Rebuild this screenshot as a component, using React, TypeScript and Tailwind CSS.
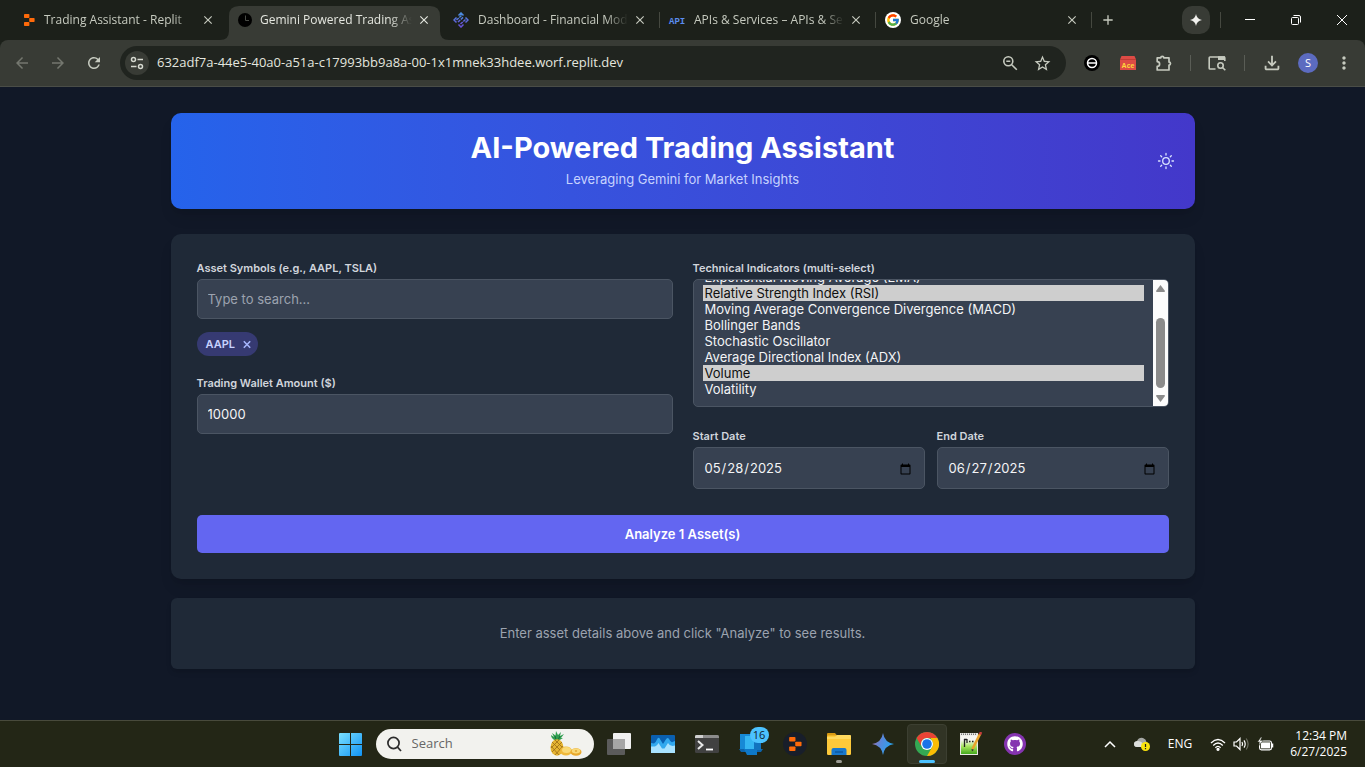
import { useEffect, useRef, useState } from "react";
import type { ReactNode } from "react";
import { FcGoogle } from "react-icons/fc";
import { FaGithub } from "react-icons/fa";
import {
  MdArrowBack,
  MdArrowForward,
  MdRefresh,
  MdStarOutline,
  MdMoreVert,
  MdClose,
  MdAdd,
  MdOutlineFileDownload,
} from "react-icons/md";

const UI = "font-['Open_Sans','Noto_Sans',sans-serif]";

/* ---------- Small drawings ---------- */

function ReplitMark({ className }: { className: string }) {
  return (
    <svg viewBox="0 0 12 12" className={className} fill="#ff6a0a" aria-hidden="true">
      <rect x="1" y="0" width="5.4" height="3.9" rx="0.7" />
      <rect x="6.2" y="4" width="5.4" height="4" rx="0.7" />
      <rect x="1" y="8.1" width="5.4" height="3.9" rx="0.7" />
    </svg>
  );
}

function ClockMark() {
  return (
    <svg viewBox="0 0 16 16" className="size-4" aria-hidden="true">
      <circle cx="8" cy="8" r="7" fill="#000" />
      <path d="M8.5 3.5V8.5H12" fill="none" stroke="#4a4d47" strokeWidth="1" />
    </svg>
  );
}

function LatticeMark() {
  return (
    <svg viewBox="0 0 16 16" className="size-4" aria-hidden="true">
      <defs>
        <linearGradient id="lattice" x1="0" y1="0" x2="0" y2="1">
          <stop offset="0" stopColor="#4a90e2" />
          <stop offset="1" stopColor="#6a4fd8" />
        </linearGradient>
      </defs>
      <g fill="none" stroke="url(#lattice)" strokeWidth="1.5">
        <path d="M5.500 3.500L8 1L10.500 3.500M12.500 5.500L15 8L12.500 10.500M10.500 12.500L8 15L5.500 12.500M3.500 10.500L1 8L3.500 5.500" />
        <path d="M3.500 8L8.500 3.500M5 10L10.500 5M7.500 12L12.500 7.500" strokeDasharray="3 0.8" />
      </g>
    </svg>
  );
}

function ApiMark() {
  return (
    <svg viewBox="0 0 18 16" className="h-4 w-[18px]" aria-hidden="true">
      <text x="1" y="12" fontSize="9" fontWeight="700" fill="#5b8def" fontFamily="'Liberation Mono', monospace">
        API
      </text>
    </svg>
  );
}

function GoogleMark() {
  return (
    <span className="flex size-4 items-center justify-center rounded-full bg-white">
      <FcGoogle className="size-[14px]" />
    </span>
  );
}

function ChromeMark() {
  return (
    <svg viewBox="0 0 24 24" className="size-6" aria-hidden="true">
      <circle cx="12" cy="12" r="12" fill="#34a853" />
      <path d="M12 0A12 12 0 0 1 22.4 6H12A6 6 0 0 0 6.8 15L1.6 6A12 12 0 0 1 12 0Z" fill="#ea4335" />
      <path d="M22.4 6A12 12 0 0 1 12 24L17.2 15A6 6 0 0 0 17.2 9L15.5 6Z" fill="#fbbc04" />
      <circle cx="12" cy="12" r="6" fill="#fff" />
      <circle cx="12" cy="12" r="4.8" fill="#1a73e8" />
    </svg>
  );
}

function Pineapple() {
  return (
    <svg viewBox="0 0 34 26" className="h-[26px] w-[34px]" aria-hidden="true">
      <path d="M8 10C4 8 3 6 3 4L6 6L4 2L7.500 4.500L8 0L10 4L13 1L12 5L16 3L13 7L15 7L10 10Z" fill="#2f9e4f" />
      <path d="M8 9L7 5M10 9L12 5" stroke="#17693a" strokeWidth="1" />
      <ellipse cx="9" cy="16.500" rx="6.500" ry="8.200" fill="#e5b432" />
      <path d="M4 11L14 21M3 15L11 24M7 9L15 17M14 11L4 21M15 15L7 24M11 9L3 17" stroke="#9a6b14" strokeWidth="0.800" />
      <ellipse cx="18" cy="20" rx="6" ry="4.500" fill="#f0b93a" />
      <ellipse cx="18.500" cy="19" rx="4.500" ry="3" fill="#f9d977" />
      <ellipse cx="28" cy="21" rx="5.500" ry="3.800" fill="#e9a92c" />
      <ellipse cx="28" cy="20" rx="4.300" ry="2.400" fill="#f9d977" />
      <ellipse cx="28" cy="20" rx="1.200" ry="0.700" fill="#d99a26" />
    </svg>
  );
}

/* ---------- Browser chrome ---------- */

type TabInfo = { title: string; icon: ReactNode; active?: boolean; divider?: boolean };

const tabs: TabInfo[] = [
  { title: "Trading Assistant - Replit", icon: <ReplitMark className="size-3" /> },
  { title: "Gemini Powered Trading Ass", icon: <ClockMark />, active: true },
  { title: "Dashboard - Financial Mode", icon: <LatticeMark />, divider: true },
  { title: "APIs & Services – APIs & Ser", icon: <ApiMark />, divider: true },
  { title: "Google", icon: <GoogleMark />, divider: true },
];

function Tab({ tab }: { tab: TabInfo }) {
  return (
    <div
      className={`relative flex w-[216px] min-w-0 items-center pl-2 pr-3 ${
        tab.active ? "mt-[6px] h-[34px] pb-[6px] text-[#e4e6df]" : "h-10 text-[#c6cabf]"
      }`}
    >
      {tab.active && (
        <svg viewBox="0 0 229 34" preserveAspectRatio="none" className="absolute -left-2 top-0 h-[34px] w-[229px]" aria-hidden="true">
          <path d="M0 34Q9 34 9 25V10Q9 0 19 0H210Q220 0 220 10V25Q220 34 229 34Z" fill="#383b35" />
        </svg>
      )}
      <span className="relative flex w-[18px] shrink-0 items-center justify-center">{tab.icon}</span>
      <span
        className={`relative mr-1 min-w-0 flex-1 overflow-hidden whitespace-nowrap text-[12px] leading-5 [mask-image:linear-gradient(to_right,#000_85%,transparent)] ${
          tab.divider ? "ml-2" : "ml-[6px]"
        }`}
      >
        {tab.title}
      </span>
      <button type="button" aria-label="Close tab" className="relative flex size-4 shrink-0 items-center justify-center">
        <MdClose className="size-[14px]" />
      </button>
      {tab.divider && <span className="absolute right-0 top-3 h-4 w-px bg-[#454840]" />}
    </div>
  );
}

function TabStrip() {
  return (
    <div className={`flex h-10 bg-[#1c201a] pl-3 ${UI}`}>
      {tabs.map((t) => (
        <Tab key={t.title} tab={t} />
      ))}
      <button type="button" aria-label="New tab" className="flex w-8 items-center justify-center text-[#c6cabf]">
        <MdAdd className="size-4" />
      </button>
      <div className="ml-auto flex items-center text-white">
        <button type="button" aria-label="Gemini" className="flex size-7 items-center justify-center rounded-[10px] bg-[#383b35]">
          <svg viewBox="0 0 12 12" className="size-3" fill="#f1f1ee" aria-hidden="true">
            <path d="M6 0Q6.800 5.200 12 6Q6.800 6.800 6 12Q5.200 6.800 0 6Q5.200 5.200 6 0Z" />
          </svg>
        </button>
        <span className="ml-[10px] mr-[6px] h-4 w-px bg-[#454840]" />
        <div className="flex">
          <button type="button" aria-label="Minimize" className="flex h-10 w-[46px] items-center justify-center">
            <svg viewBox="0 0 10 10" className="size-[10px]" stroke="currentColor" aria-hidden="true"><path d="M0 4.500H10" /></svg>
          </button>
          <button type="button" aria-label="Restore" className="flex h-10 w-[46px] items-center justify-center">
            <svg viewBox="0 0 10 10" className="size-[10px]" stroke="currentColor" fill="none" aria-hidden="true">
              <rect x="0.5" y="2.500" width="7" height="7" rx="1" />
              <path d="M2.500 0.500H8Q9.500 0.500 9.500 2V7.500" />
            </svg>
          </button>
          <button type="button" aria-label="Close window" className="flex h-10 w-[46px] items-center justify-center">
            <svg viewBox="0 0 10 10" className="size-[10px]" stroke="currentColor" aria-hidden="true"><path d="M0 0L10 10M10 0L0 10" /></svg>
          </button>
        </div>
      </div>
    </div>
  );
}

function ToolButton({ label, dim, children }: { label: string; dim?: boolean; children: ReactNode }) {
  return (
    <button type="button" aria-label={label} className={`flex h-7 w-9 items-center justify-center ${dim ? "text-[#74776f]" : "text-[#c6cabf]"}`}>
      {children}
    </button>
  );
}

function Toolbar() {
  return (
    <div className="flex bg-[#1c201a]">
      <div className={`flex h-[47px] flex-1 items-center rounded-t-lg border-b border-[#4a4d47] bg-[#383b35] pl-1 pr-[3px] ${UI}`}>
        <ToolButton label="Back" dim><MdArrowBack className="size-[18px]" /></ToolButton>
        <ToolButton label="Forward" dim><MdArrowForward className="size-[18px]" /></ToolButton>
        <ToolButton label="Reload"><MdRefresh className="size-[18px]" /></ToolButton>
        <div className="ml-2 flex h-[34px] min-w-0 flex-1 items-center rounded-full bg-[#20241f] pl-[5px] pr-2">
          <button type="button" aria-label="Site information" className="flex size-6 shrink-0 items-center justify-center rounded-full bg-[#383b35] text-[#d5d8cf]">
            <svg viewBox="0 0 14 14" className="size-[14px]" fill="none" stroke="currentColor" strokeWidth="1.5" aria-hidden="true">
              <circle cx="3.500" cy="3.500" r="2" />
              <path d="M7.500 3.500H13M1 10.500H6.500" />
              <circle cx="10.500" cy="10.500" r="2" />
            </svg>
          </button>
          <input
            aria-label="Address"
            className="ml-2 min-w-0 flex-1 bg-transparent text-[13px] text-[#e4e6df] outline-none"
            defaultValue="632adf7a-44e5-40a0-a51a-c17993bb9a8a-00-1x1mnek33hdee.worf.replit.dev"
          />
          <button type="button" aria-label="Zoom" className="flex size-8 items-center justify-center text-[#c6cabf]">
            <svg viewBox="0 0 16 16" className="size-4" fill="none" stroke="currentColor" strokeWidth="1.6" aria-hidden="true">
              <circle cx="6.300" cy="6.300" r="4.500" />
              <path d="M9.700 9.700L14.800 14.800M4.300 6.300H8.300" />
            </svg>
          </button>
          <button type="button" aria-label="Bookmark" className="flex size-8 items-center justify-center text-[#c6cabf]">
            <MdStarOutline className="size-[19px]" />
          </button>
        </div>
        <div className="ml-2 flex items-center">
          <ToolButton label="Extension">
            <svg viewBox="0 0 16 16" className="size-4" aria-hidden="true">
              <circle cx="8" cy="8" r="8" fill="#000" />
              <circle cx="8" cy="8" r="4.500" fill="none" stroke="#fff" strokeWidth="1.500" />
              <path d="M4 8H12" stroke="#fff" strokeWidth="1.500" />
            </svg>
          </ToolButton>
          <ToolButton label="Ace extension">
            <svg viewBox="0 0 16 14" className="h-[14px] w-4" aria-hidden="true">
              <path d="M1.500 0H14.500L16 3.500V14H0V3.500Z" fill="#dd4b45" />
              <path d="M0 3.500H16" stroke="#b93832" strokeWidth="0.800" />
              <text x="8" y="12" textAnchor="middle" fontSize="7" fontWeight="700" fill="#ffd83a" fontFamily="'Liberation Sans', sans-serif">Ace</text>
            </svg>
          </ToolButton>
          <ToolButton label="Extensions">
            <svg viewBox="0 0 16 16" className="size-4" fill="none" stroke="currentColor" strokeWidth="1.7" strokeLinejoin="round" aria-hidden="true">
              <path d="M1.200 2.800H4.800A1.500 1.500 0 0 1 7.800 2.800H13V7.100A1.500 1.500 0 0 1 13 10.100V15H1.200V11.400A2.400 2.400 0 0 0 1.200 6.600Z" />
            </svg>
          </ToolButton>
          <span className="mx-2 h-4 w-px bg-[#5a5d56]" />
          <ToolButton label="Search this page">
            <svg viewBox="0 0 18 16" className="h-4 w-[18px]" fill="none" stroke="currentColor" strokeWidth="1.6" aria-hidden="true">
              <path d="M7.500 14H2Q1.200 14 1.200 13.200V2.800Q1.200 2 2 2H16Q16.800 2 16.800 2.800V6" />
              <path d="M10 1.200H17V5H10Z" fill="currentColor" stroke="none" />
              <circle cx="12.500" cy="10.500" r="2.700" />
              <path d="M14.500 12.500L17.300 15.300" />
            </svg>
          </ToolButton>
          <span className="mx-[9px] h-4 w-px bg-[#5a5d56]" />
          <ToolButton label="Downloads"><MdOutlineFileDownload className="size-[22px]" /></ToolButton>
          <ToolButton label="Profile">
            <span className="flex size-5 items-center justify-center rounded-full bg-[#5c6bc0] text-[11px] text-white">S</span>
          </ToolButton>
          <ToolButton label="Menu"><MdMoreVert className="size-5" /></ToolButton>
        </div>
      </div>
    </div>
  );
}

/* ---------- Trading page ---------- */

const indicators = [
  "Simple Moving Average (SMA)",
  "Exponential Moving Average (EMA)",
  "Relative Strength Index (RSI)",
  "Moving Average Convergence Divergence (MACD)",
  "Bollinger Bands",
  "Stochastic Oscillator",
  "Average Directional Index (ADX)",
  "Volume",
  "Volatility",
];

const LABEL = "block text-[11px] font-semibold leading-4 text-gray-300 mb-[3px]";
const FIELD =
  "block w-full rounded-[5px] border border-[#4b5563] bg-[#374151] px-[10px] text-[13px] text-[#f3f4f6] outline-none placeholder:text-[#9ca3af]";

function IndicatorSelect() {
  const ref = useRef<HTMLSelectElement>(null);
  const [picked, setPicked] = useState(["Relative Strength Index (RSI)", "Volume"]);

  useEffect(() => {
    if (ref.current) ref.current.scrollTop = ref.current.scrollHeight;
  }, []);

  return (
    <div className="flex h-32 overflow-hidden rounded-[5px] border border-[#4b5563] bg-[#374151]">
      <select
        id="indicators"
        ref={ref}
        multiple
        value={picked}
        onChange={(e) => setPicked(Array.from(e.target.selectedOptions, (o) => o.value))}
        className="h-full min-w-0 flex-1 bg-transparent px-[9px] pt-[10px] pb-[9px] text-[13px] text-[#f3f4f6] outline-none [scrollbar-width:none]"
      >
        {indicators.map((i) => (
          <option key={i} value={i} className="h-4 min-h-0 px-[2px] py-0 leading-4 checked:bg-[#cecece] checked:text-[#101010]">
            {i}
          </option>
        ))}
      </select>
      <div className="flex w-[15px] flex-col items-center bg-[#fcfcfc] pt-[5px] pb-1" aria-hidden="true">
        <svg viewBox="0 0 9 7" className="h-[7px] w-[9px]" fill="#8b8b8b"><path d="M4.500 0L9 6Q9 7 8 7H1Q0 7 0 6Z" /></svg>
        <div className="mt-auto mb-[7px] h-[70px] w-[9px] rounded-full bg-[#8b8b8b]" />
        <svg viewBox="0 0 9 7" className="h-[7px] w-[9px]" fill="#8b8b8b"><path d="M4.500 7L9 1Q9 0 8 0H1Q0 0 0 1Z" /></svg>
      </div>
    </div>
  );
}

function SunIcon() {
  return (
    <svg viewBox="0 0 18 18" className="size-[18px]" fill="none" stroke="currentColor" strokeWidth="1.3" strokeLinecap="round" aria-hidden="true">
      <circle cx="9" cy="9" r="3.300" />
      <path d="M9 1.500V3M9 15V16.500M1.500 9H3M15 9H16.500M3.700 3.700L4.700 4.700M13.300 13.300L14.300 14.300M3.700 14.300L4.700 13.300M13.300 4.700L14.300 3.700" />
    </svg>
  );
}

function TradingPage() {
  return (
    <main className="flex-1 bg-[#111827] px-4 pt-[26px] pb-[51px] font-['Inter',sans-serif]">
      <div className="mx-auto max-w-[1024px]">
        <header className="relative rounded-[10px] bg-linear-to-r from-[#2563eb] to-[#4338ca] pt-[19px] pb-[20px] text-center shadow-lg">
          <h1 className="text-[29px] font-bold leading-8 text-white">AI-Powered Trading Assistant</h1>
          <p className="mt-[6px] text-[13px] leading-[19px] text-[#c7d2fe]">Leveraging Gemini for Market Insights</p>
          <button type="button" aria-label="Toggle theme" className="absolute inset-y-0 right-5 text-[#dbe4ff]">
            <SunIcon />
          </button>
        </header>

        <form className="mt-[25px] rounded-[10px] bg-[#1f2937] p-[26px] shadow-lg" onSubmit={(e) => e.preventDefault()}>
          <div className="grid grid-cols-2 gap-5">
            <div>
              <label htmlFor="symbols" className={LABEL}>Asset Symbols (e.g., AAPL, TSLA)</label>
              <input id="symbols" type="text" placeholder="Type to search..." className={`${FIELD} h-10`} />
              <div className="mt-[13px] flex">
                <span className="inline-flex h-6 items-center gap-[7px] rounded-full bg-[#363a72] pl-[9px] pr-[6px] text-[11px] font-semibold text-[#c7d2fe]">
                  AAPL
                  <button type="button" aria-label="Remove AAPL" className="text-[#a5b4fc]">
                    <svg viewBox="0 0 10 10" className="size-[10px]" stroke="currentColor" strokeWidth="1.600" aria-hidden="true">
                      <path d="M1.800 2.300L8.200 8.700M8.200 2.300L1.800 8.700" />
                    </svg>
                  </button>
                </span>
              </div>
              <label htmlFor="wallet" className={`${LABEL} mt-[19px]`}>Trading Wallet Amount ($)</label>
              <input id="wallet" type="text" inputMode="numeric" defaultValue="10000" className={`${FIELD} h-10`} />
            </div>
            <div>
              <label htmlFor="indicators" className={LABEL}>Technical Indicators (multi-select)</label>
              <IndicatorSelect />
              <div className="mt-[21px] grid grid-cols-2 gap-3">
                <div>
                  <label htmlFor="start" className={LABEL}>Start Date</label>
                  <input id="start" type="date" defaultValue="2025-05-28" className={`${FIELD} h-[42px] pt-[2px]`} />
                </div>
                <div>
                  <label htmlFor="end" className={LABEL}>End Date</label>
                  <input id="end" type="date" defaultValue="2025-06-27" className={`${FIELD} h-[42px] pt-[2px]`} />
                </div>
              </div>
            </div>
          </div>
          <button type="submit" className="mt-[26px] h-[38px] w-full rounded-[5px] bg-[#6366f1] pt-[2px] text-[13px] font-semibold text-white">
            Analyze 1 Asset(s)
          </button>
        </form>

        <section className="mt-[19px] rounded-[6px] bg-[#1f2937] py-[26px] text-center shadow-md">
          <p className="text-[13px] leading-[19px] text-[#9ca3af]">Enter asset details above and click "Analyze" to see results.</p>
        </section>
      </div>
    </main>
  );
}

/* ---------- Taskbar ---------- */

function AppSlot({ label, children }: { label: string; children: ReactNode }) {
  return (
    <button type="button" aria-label={label} className="relative flex h-[46px] w-11 items-center justify-center">
      {children}
    </button>
  );
}

function Taskbar() {
  return (
    <footer className={`grid h-[47px] grid-cols-[1fr_auto_1fr] items-center border-t border-[#484a3c] bg-[#232616] text-white ${UI}`}>
      <div />
      <div className="flex items-center">
        <AppSlot label="Start">
          <svg viewBox="0 0 23 23" className="size-[23px]" aria-hidden="true">
            <defs>
              <linearGradient id="win" x1="0" y1="0" x2="1" y2="1">
                <stop offset="0" stopColor="#7be0ff" />
                <stop offset="1" stopColor="#1093f5" />
              </linearGradient>
            </defs>
            <path d="M1 0H11V11H0V1Q0 0 1 0ZM12 0H22Q23 0 23 1V11H12ZM0 12H11V23H1Q0 23 0 22ZM12 12H23V22Q23 23 22 23H12Z" fill="url(#win)" />
          </svg>
        </AppSlot>
        <label className="mx-[3px] flex h-[30px] w-[218px] items-center rounded-full bg-[#f2f2ee] pl-[10px] pr-3">
          <svg viewBox="0 0 16 16" className="size-4 shrink-0" fill="none" stroke="#2c2c2c" strokeWidth="1.700" aria-hidden="true">
            <circle cx="7.500" cy="7" r="5.600" />
            <path d="M11.500 11.200L15 15" />
          </svg>
          <input aria-label="Search" placeholder="Search" className="ml-[10px] min-w-0 flex-1 bg-transparent text-[13px] text-[#333] outline-none placeholder:text-[#666]" />
          <Pineapple />
        </label>
        <AppSlot label="Task view">
          <svg viewBox="0 0 24 22" className="h-[22px] w-6" aria-hidden="true">
            <rect x="6" y="0" width="18" height="16" rx="1" fill="#f0f0f0" />
            <rect x="0" y="6" width="18" height="16" rx="1" fill="#5b5b5b" />
            <rect x="6" y="6" width="12" height="10" fill="#a6a6a6" />
          </svg>
        </AppSlot>
        <AppSlot label="System monitor">
          <svg viewBox="0 0 24 18" className="h-[18px] w-6" aria-hidden="true">
            <rect width="24" height="18" rx="1" fill="#0a5fb0" />
            <path d="M0 8L3 8.500Q5 7 6.500 3.500Q8 1.500 9.500 5L12 9L14.500 5Q16.500 1.500 18 4Q20 8 21.500 7L24 6V18H0Z" fill="#31a8ee" />
            <path d="M0 11.500H4Q6 11 7.500 8L11 13.500H13.500L17 8Q19 12 24 10.500V18H0Z" fill="#a8e2ff" />
          </svg>
        </AppSlot>
        <AppSlot label="Terminal">
          <svg viewBox="0 0 24 18" className="h-[18px] w-6" aria-hidden="true">
            <rect width="24" height="18" rx="1.500" fill="#414141" />
            <path d="M0 3V1.500Q0 0 1.500 0H22.500Q24 0 24 1.500V3Z" fill="#8c8c8c" />
            <path d="M0 3V1.500Q0 0 1.500 0H8V3Z" fill="#cfcfcf" />
            <path d="M3 6L7.500 10L3 14" fill="none" stroke="#e8e8e8" strokeWidth="2" />
            <path d="M11 14.500H18" stroke="#fff" strokeWidth="1.800" />
          </svg>
        </AppSlot>
        <AppSlot label="Phone Link">
          <svg viewBox="0 0 24 22" className="h-[22px] w-6" aria-hidden="true">
            <path d="M1 1H13V16H1Z" fill="#1789d6" />
            <path d="M6 3H18V18H6Z" fill="#35b5f2" />
            <path d="M0 16H24L22 19H2Z" fill="#0b64ae" />
            <path d="M5 16H18V22H8Z" fill="#0e78c8" />
            <path d="M15 9H22V17H15Z" fill="#1273c0" />
          </svg>
          <span className="absolute right-1 top-[6px] flex h-4 min-w-[19px] items-center justify-center rounded-full bg-[#4cc2ff] text-[11px] text-[#102030]">16</span>
        </AppSlot>
        <AppSlot label="Replit">
          <span className="flex size-6 items-center justify-center rounded-full bg-[#181e2a]"><ReplitMark className="size-[14px]" /></span>
        </AppSlot>
        <AppSlot label="File Explorer">
          <svg viewBox="0 0 24 22" className="h-[22px] w-6" aria-hidden="true">
            <path d="M0 5V1Q0 0 1 0H8L10 2.500V5Z" fill="#d99a12" />
            <rect y="2.500" width="24" height="19.500" rx="1.200" fill="#fdc93a" />
            <path d="M0 4H8L10 2H23Q24 2 24 3V6H0Z" fill="#ffd95e" />
            <path d="M4.500 22V17Q4.500 15 6.500 15H17.500Q19.500 15 19.500 17V22Z" fill="#1878cc" />
            <path d="M8 19H16" stroke="#0c58a0" strokeWidth="1.500" />
          </svg>
          <span className="absolute bottom-1 left-[19px] h-[3px] w-[6px] rounded-full bg-[#9c9c94]" />
        </AppSlot>
        <AppSlot label="Gemini">
          <svg viewBox="0 0 22 22" className="size-[22px]" aria-hidden="true">
            <defs>
              <linearGradient id="gem" x1="0" y1="0" x2="1" y2="0.400">
                <stop offset="0" stopColor="#b56a9a" />
                <stop offset="0.500" stopColor="#5688dc" />
                <stop offset="1" stopColor="#27a5ee" />
              </linearGradient>
            </defs>
            <path d="M11 0Q12.500 9.500 22 11Q12.500 12.500 11 22Q9.500 12.500 0 11Q9.500 9.500 11 0Z" fill="url(#gem)" />
          </svg>
        </AppSlot>
        <AppSlot label="Chrome">
          <span className="absolute inset-x-[2px] inset-y-[3px] rounded-[4px] border border-[#3c3f31] bg-[#313425]" />
          <span className="relative"><ChromeMark /></span>
          <span className="absolute bottom-1 left-[14px] h-[3px] w-4 rounded-full bg-[#4cc2ff]" />
        </AppSlot>
        <AppSlot label="Notepad++">
          <svg viewBox="0 0 24 24" className="size-6" aria-hidden="true">
            <defs>
              <linearGradient id="sheet" x1="0" y1="0" x2="0" y2="1">
                <stop offset="0.25" stopColor="#f6f6f2" />
                <stop offset="0.6" stopColor="#a5e35c" />
                <stop offset="1" stopColor="#43a91c" />
              </linearGradient>
            </defs>
            <rect x="1" y="1" width="18" height="22" fill="#e8e8e4" />
            <rect x="2" y="3.500" width="16" height="18.500" fill="url(#sheet)" />
            <path d="M2 2.200H18" stroke="#777" strokeWidth="1.500" strokeDasharray="1 1" />
            <path d="M5.500 7V15M5 7.500H8M8 7V11M10 9.500H11.500M13 9.500H14.500" stroke="#222" strokeWidth="1.300" />
            <path d="M21 2L13.500 17" stroke="#e9a32c" strokeWidth="2.600" />
            <path d="M22 0L21 2.500" stroke="#c53c3c" strokeWidth="2.600" />
            <path d="M12.500 17L13 19.500L15 17.800Z" fill="#333" />
          </svg>
        </AppSlot>
        <AppSlot label="GitHub Desktop">
          <span className="flex size-[22px] items-center justify-center rounded-full bg-[#8534b0]"><FaGithub className="size-4" /></span>
        </AppSlot>
      </div>
      <div className="flex items-center justify-end pr-[18px]">
        <button type="button" aria-label="Hidden icons" className="flex w-8 justify-center">
          <svg viewBox="0 0 12 8" className="h-2 w-3" fill="none" stroke="currentColor" strokeWidth="1.500" aria-hidden="true"><path d="M1 7L6 2L11 7" /></svg>
        </button>
        <svg viewBox="0 0 18 16" className="ml-[7px] h-4 w-[18px]" aria-hidden="true">
          <path d="M4 11Q1 11 1 8Q1 5.500 4 5Q6 1 10 2Q13 3 13.500 6Q16 7 15 11Z" fill="#a5a7a4" />
          <path d="M4 5Q9 4 12 11H4Q1 11 1 8Q1 5.500 4 5Z" fill="#dcdedb" />
          <circle cx="12.500" cy="10.500" r="4.500" fill="#fbe40c" />
          <path d="M12.500 8V11M12.500 12V13.200" stroke="#222" strokeWidth="1.200" />
        </svg>
        <span className="ml-[17px] text-[12px]">ENG</span>
        <button type="button" aria-label="Network, sound and battery" className="ml-[18px] flex items-center gap-[7px]">
          <svg viewBox="0 0 16 13" className="h-[13px] w-4" fill="none" stroke="currentColor" strokeWidth="1.300" aria-hidden="true">
            <path d="M1 5Q8 -2 15 5M3.200 7.500Q8 2.500 12.800 7.500M5.400 9.800Q8 7 10.600 9.800" />
            <circle cx="8" cy="11.300" r="1" fill="currentColor" />
          </svg>
          <svg viewBox="0 0 17 14" className="h-[14px] w-[17px]" fill="none" stroke="currentColor" strokeWidth="1.200" aria-hidden="true">
            <path d="M1 5H3.500L7 1.500V12.500L3.500 9H1Z" />
            <path d="M9 5Q10.200 7 9 9M11 3.300Q13.400 7 11 10.700" />
            <path d="M13.200 1.500Q17 7 13.200 12.500" stroke="#6c6e62" />
          </svg>
          <svg viewBox="0 0 17 14" className="h-[14px] w-[17px]" aria-hidden="true">
            <rect x="2.600" y="4" width="11.800" height="8.800" rx="1.800" fill="none" stroke="#fff" strokeWidth="1.200" />
            <rect x="4" y="5.400" width="9" height="6" fill="#fff" />
            <path d="M15.500 6.500V10.500" stroke="#fff" strokeWidth="1.500" />
            <path d="M4 0L0.500 5H3L2 8.500L6 3.500H3.500L5 0Z" fill="#fff" stroke="#232616" strokeWidth="0.500" />
          </svg>
        </button>
        <div className="ml-4 text-right text-[12px] leading-4">
          <div>12:34 PM</div>
          <div>6/27/2025</div>
        </div>
      </div>
    </footer>
  );
}

export default function App() {
  return (
    <div className="flex min-h-screen flex-col bg-[#111827]">
      <TabStrip />
      <Toolbar />
      <TradingPage />
      <Taskbar />
    </div>
  );
}
